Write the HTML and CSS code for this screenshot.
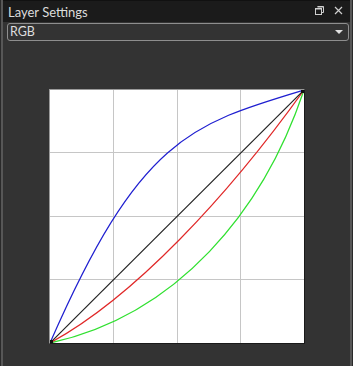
FILE: index.html
```html
<!DOCTYPE html>
<html>
<head>
<meta charset="utf-8">
<link rel="stylesheet" href="styles.css">
</head>
<body>
<div class="window">
  <div class="titlebar">
    <span class="title">Layer Settings</span>
    <div class="tools">
      <svg class="icon" width="9" height="9" viewBox="0 0 9 9">
        <path d="M2.5 0.5h6v6h-2" fill="none" stroke="#cfcfcf" stroke-width="1"/>
        <rect x="0.5" y="2.5" width="6" height="6" fill="none" stroke="#cfcfcf" stroke-width="1"/>
        <path d="M2.5 1h6" stroke="#cfcfcf" stroke-width="1"/>
        <path d="M0.5 3h6" stroke="#cfcfcf" stroke-width="1"/>
      </svg>
      <svg class="icon" width="9" height="9" viewBox="0 0 9 9">
        <path d="M1 1L8 8M8 1L1 8" stroke="#cfcfcf" stroke-width="1.2"/>
      </svg>
    </div>
  </div>
  <div class="select">
    <span class="select-text">RGB</span>
    <span class="arrow"></span>
  </div>
  <div class="stage">
    <div class="plot">
      <svg class="curves" width="254" height="253" viewBox="0 0 254 253">
        <g stroke="#c6c6c6" stroke-width="1" shape-rendering="crispEdges">
          <line x1="63.5" y1="0" x2="63.5" y2="253"/>
          <line x1="127" y1="0" x2="127" y2="253"/>
          <line x1="190.5" y1="0" x2="190.5" y2="253"/>
          <line x1="0" y1="62.5" x2="254" y2="62.5"/>
          <line x1="0" y1="126" x2="254" y2="126"/>
          <line x1="0" y1="189.5" x2="254" y2="189.5"/>
        </g>
        <g transform="translate(0,253) scale(254,-253)" fill="none">
          <path vector-effect="non-scaling-stroke" stroke="#1f1fd0" stroke-width="1.2"
            d="M0,0 C0.35,0.805 0.55,0.865 1,1"/>
          <path vector-effect="non-scaling-stroke" stroke="#30e030" stroke-width="1.3"
            d="M0,0 C0.5,0.11 0.84,0.52 1,1"/>
          <path vector-effect="non-scaling-stroke" stroke="#e02828" stroke-width="1.2"
            d="M0,0 C0.33,0.18 0.7,0.58 1,1"/>
          <line vector-effect="non-scaling-stroke" x1="0" y1="0" x2="1" y2="1" stroke="#222" stroke-width="1.2"/>
        </g>
        <rect x="0" y="250" width="3" height="3" fill="#111"/>
        <rect x="251" y="0" width="3" height="3" fill="#111"/>
      </svg>
    </div>
  </div>
</div>
</body>
</html>
```
FILE: styles.css
```css
html, body {
  margin: 0;
  padding: 0;
  background: #2a2a2a;
  width: 353px;
  height: 366px;
  overflow: hidden;
}
.window {
  margin: 0 1px;
  height: 366px;
  border-left: 2px solid #575757;
  border-right: 2px solid #575757;
  background: #333333;
  display: flex;
  flex-direction: column;
  font-family: Lato, "Noto Sans", sans-serif;
}
.titlebar {
  height: 22px;
  background: #1b1b1b;
  border-top: 1px solid #111;
  box-sizing: border-box;
  display: flex;
  align-items: center;
  justify-content: space-between;
  padding: 0 7px 0 5px;
}
.title {
  color: #dcdcdc;
  font-size: 13px;
  line-height: 22px;
}
.tools {
  display: flex;
  gap: 10px;
  align-items: center;
  margin-top: -3px;
}
.icon {
  display: block;
}
.select {
  margin: 1px 1px 0 4px;
  height: 18px;
  box-sizing: border-box;
  border: 1px solid #8e8e8e;
  border-radius: 3px;
  display: flex;
  align-items: center;
  justify-content: space-between;
  padding: 0 5px 0 2px;
}
.select-text {
  color: #dedede;
  font-size: 12.5px;
  line-height: 16px;
}
.arrow {
  width: 0;
  height: 0;
  border-left: 4px solid transparent;
  border-right: 4px solid transparent;
  border-top: 4px solid #e0e0e0;
}
.stage {
  flex: 1;
  display: flex;
  justify-content: center;
  align-items: flex-start;
  padding-top: 48px;
}
.plot {
  background: #fff;
  border-top: 1px solid #9a9a9a;
  border-left: 1px solid #9a9a9a;
  border-right: 1px solid #1a1a1a;
  border-bottom: 1px solid #1a1a1a;
  width: 254px;
  height: 253px;
  margin-left: 1px;
}
.curves {
  display: block;
}
```
